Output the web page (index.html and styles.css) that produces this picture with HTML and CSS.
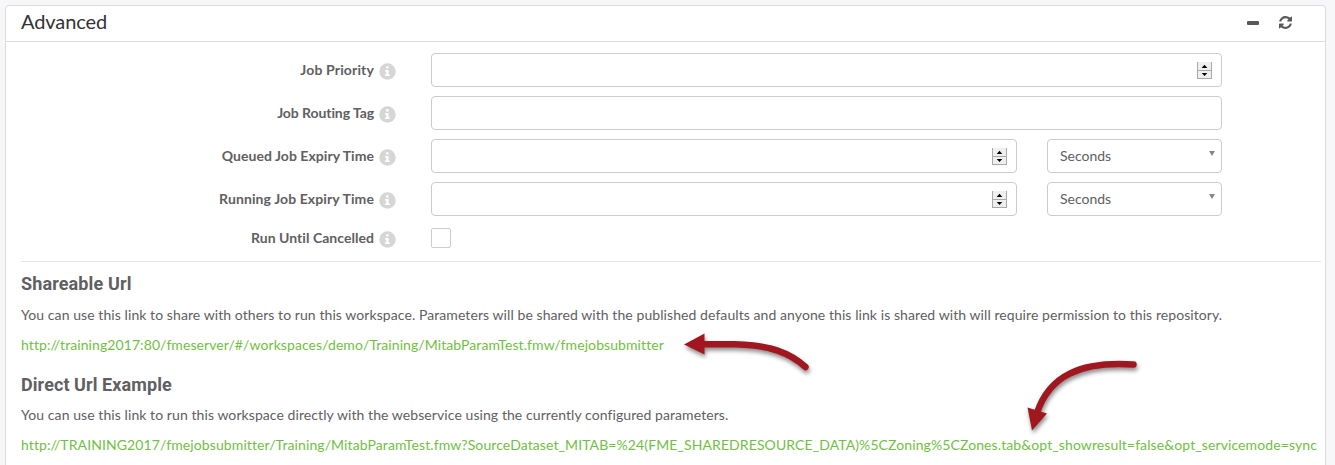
FILE: index.html
```html
<!DOCTYPE html>
<html lang="en">
<head>
<meta charset="utf-8">
<title>Advanced</title>
<link rel="stylesheet" href="styles.css">
</head>
<body>
<svg class="defs" width="0" height="0" aria-hidden="true">
  <symbol id="info" viewBox="0 0 17 17">
    <circle cx="8.5" cy="8.5" r="8.2" fill="#d6d6d6"/>
    <path d="M7 3.3h2.6v2.2H7zM6 7h3.6v4.4h1.2v1.6H6v-1.6h1.2V8.6H6z" fill="#fff"/>
  </symbol>
  <symbol id="spin" viewBox="0 0 15 17">
    <path d="M0 0h15v17H0z" fill="#efefef"/>
    <path d="M.5 0v17M14.5 0v17M0 8.5h15M0 16.5h15" stroke="#a9a9a9" fill="none"/>
    <path d="M7.5 2.8L10.3 6H4.7zM7.5 14L4.7 11h5.6z" fill="#000"/>
  </symbol>
</svg>
<section class="card">
  <header class="card-header">
    <h1 class="card-title">Advanced</h1>
    <div class="tools">
      <span class="minus"></span>
      <svg class="refresh" viewBox="0 0 1536 1536"><path fill="#58585a" d="M1511 928q0 5-1 7-64 268-268 434.500T764 1536q-146 0-282.500-55T238 1324l-129 129q-19 19-45 19t-45-19-19-45V960q0-26 19-45t45-19h448q26 0 45 19t19 45-19 45l-137 137q71 66 161 102t187 36q134 0 250-65t186-179q11-17 53-117 8-23 30-23h192q13 0 22.500 9.500t9.500 22.500zm25-800v448q0 26-19 45t-45 19h-448q-26 0-45-19t-19-45 19-45l138-138Q969 256 768 256q-134 0-250 65T332 500q-11 17-53 117-8 23-30 23H50q-13 0-22.500-9.500T18 608v-7q65-268 270-434.500T768 0q146 0 284 55.500T1297 212l130-129q19-19 45-19t45 19 19 45z"/></svg>
    </div>
  </header>
  <div class="card-body">
    <div class="row"><label class="label priority">Job Priority</label><svg class="info"><use href="#info"/></svg><div class="field wide"><svg class="spin"><use href="#spin"/></svg></div></div>
    <div class="row"><label class="label routing">Job Routing Tag</label><svg class="info"><use href="#info"/></svg><div class="field wide"></div></div>
    <div class="row"><label class="label">Queued Job Expiry Time</label><svg class="info"><use href="#info"/></svg><div class="field"><svg class="spin"><use href="#spin"/></svg></div><div class="select"><span>Seconds</span><i class="caret"></i></div></div>
    <div class="row"><label class="label running">Running Job Expiry Time</label><svg class="info"><use href="#info"/></svg><div class="field"><svg class="spin"><use href="#spin"/></svg></div><div class="select"><span>Seconds</span><i class="caret"></i></div></div>
    <div class="row short"><label class="label">Run Until Cancelled</label><svg class="info"><use href="#info"/></svg><div class="check"></div></div>
    <div class="links">
      <h2 class="heading">Shareable Url</h2>
      <p class="text"><span>You can use this link to share with others to run this workspace. Parameters will be shared with the published defaults and anyone this link is shared with will require permission to this repository.</span></p>
      <p class="text link"><a>http://training2017:80/fmeserver/#/workspaces/demo/Training/MitabParamTest.fmw/fmejobsubmitter</a></p>
      <h2 class="heading second">Direct Url Example</h2>
      <p class="text"><span>You can use this link to run this workspace directly with the webservice using the currently configured parameters.</span></p>
      <p class="text link direct"><a>http://TRAINING2017/fmejobsubmitter/Training/MitabParamTest.fmw?SourceDataset_MITAB=%24(FME_SHAREDRESOURCE_DATA)%5CZoning%5CZones.tab&amp;opt_showresult=false&amp;opt_servicemode=sync</a></p>
    </div>
  </div>
</section>
<svg class="arrows" viewBox="0 0 1335 465">
  <g fill="none" stroke="#a1171f" stroke-width="6.5" stroke-linecap="round">
    <path d="M702 344.200H735C770 345 790 353 805.500 367"/>
    <path d="M1133.500 364.500C1080 361 1049 376 1037 413"/>
  </g>
  <path fill="#a1171f" d="M684 344.500L704.500 333.500V354.500zM1032 430.500L1027.500 407.500L1047 413.500z"/>
</svg>
</body>
</html>
```
FILE: styles.css
```css
* { box-sizing: border-box; }
body {
  margin: 0;
  padding: 5px 9px 0 5px;
  height: 465px;
  overflow: hidden;
  background: #f7f7fa;
  color: #606062;
  font-family: Lato, "Liberation Sans", sans-serif;
  font-size: 14px;
}
h1, h2, p { margin: 0; }
.defs { position: absolute; }
.card {
  height: 480px;
  background: #fff;
  border: 1px solid #dcdcde;
  border-radius: 4px;
}
.card-header {
  display: flex;
  justify-content: space-between;
  align-items: flex-start;
  height: 36px;
  padding: 0 33px 0 15px;
  border-bottom: 1px solid #dcdcde;
}
.card-title {
  font-size: 20px;
  font-weight: 400;
  line-height: 30px;
  letter-spacing: -.1px;
  color: #333;
}
.tools { display: flex; align-items: center; gap: 20px; height: 33px; }
.minus { width: 12px; height: 4px; border-radius: 1px; background: #58585a; }
.refresh { width: 13px; height: 13px; }
.card-body { padding: 11px 4px 0 15px; }
.row { display: flex; align-items: center; height: 34px; margin-bottom: 9px; }
.row.short { height: 20px; margin: 12px 0 13px; }
.label { width: 353px; text-align: right; font-weight: 700; line-height: 20px; white-space: nowrap; letter-spacing: .04px; }
.priority { letter-spacing: .15px; }
.routing { letter-spacing: -.08px; }
.running { letter-spacing: .1px; }
.info { width: 17px; height: 17px; margin: 2px 35px 0 5px; }
.field {
  display: flex;
  align-items: center;
  justify-content: flex-end;
  width: 586px;
  height: 34px;
  padding-right: 9px;
  border: 1px solid #ccc;
  border-radius: 4px;
}
.wide { width: 791px; }
.spin { width: 15px; height: 17px; }
.select {
  display: flex;
  justify-content: space-between;
  width: 175px;
  height: 34px;
  margin-left: 30px;
  padding: 0 6px 0 12px;
  border: 1px solid #ccc;
  border-radius: 4px;
  line-height: 31px;
}
.caret {
  width: 6px;
  height: 5px;
  margin-top: 11px;
  background: #888;
  clip-path: polygon(0 0, 100% 0, 50% 100%);
}
.check { width: 20px; height: 20px; border: 1px solid #ccc; border-radius: 2px; }
.links { border-top: 1px solid #e2e8ea; padding-top: 12px; }
.heading { font: 700 18px/20px Roboto, "Liberation Sans", sans-serif; letter-spacing: .13px; }
.heading.second { margin-top: 20px; letter-spacing: .08px; }
.text { line-height: 20px; margin-top: 10px; white-space: nowrap; letter-spacing: .077px; }
.heading + .text { margin-top: 11px; }
.heading.second + .text { margin-top: 10px; }
.link { color: #71bf44; letter-spacing: .083px; }
.direct { letter-spacing: .099px; }
.arrows {
  position: absolute;
  inset: 0;
  width: 1335px;
  height: 465px;
  filter: drop-shadow(1px 3px 2px rgba(0, 0, 0, .45));
}
```
